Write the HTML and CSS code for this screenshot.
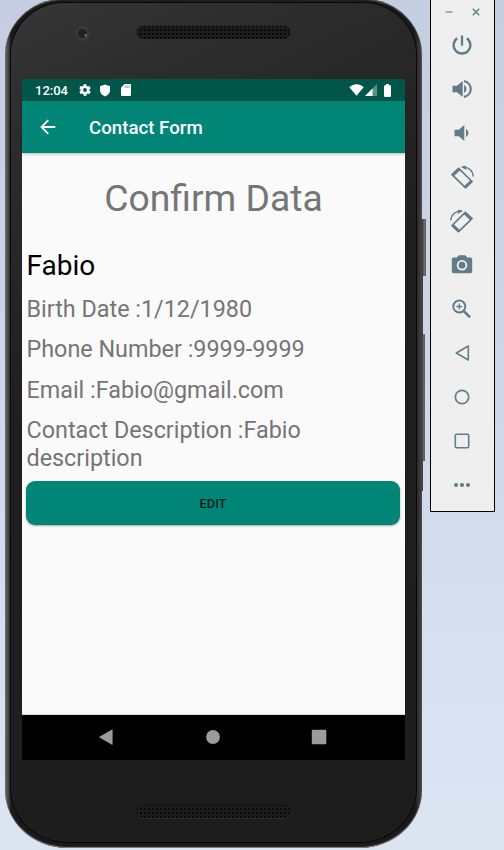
FILE: index.html
```html
<!DOCTYPE html>
<html lang="en">
<head>
<meta charset="utf-8">
<title>Contact Form</title>
<link rel="stylesheet" href="styles.css">
</head>
<body>
<div class="desktop">
  <div class="phone">
    <span class="side-key power-key"></span>
    <span class="side-key edge-key"></span>
    <span class="side-key volume-key"></span>
    <div class="face">
      <div class="bezel-top">
        <span class="camera"></span>
        <span class="speaker"></span>
      </div>
      <div class="screen">
        <div class="status-bar">
          <span class="clock">12:04</span>
          <svg class="gear" width="14" height="14" viewBox="0 0 24 24"><path fill="#fff" fill-rule="evenodd" d="M19.4 13c.1-.3.1-.6.1-1s0-.7-.1-1l2.1-1.600c.2-.2.2-.4.1-.6l-2-3.500c-.1-.2-.4-.3-.6-.2l-2.500 1c-.5-.4-1.100-.7-1.700-1l-.4-2.600c0-.2-.2-.5-.4-.5h-4c-.2 0-.5.2-.5.4l-.4 2.700c-.6.2-1.100.6-1.700 1l-2.400-1c-.2-.1-.5 0-.6.2l-2 3.500c-.1.2-.1.5.1.6L4.600 11c-.1.3-.1.700-.1 1s0 .7.1 1l-2.100 1.600c-.2.2-.2.4-.1.6l2 3.500c.1.2.4.3.6.2l2.500-1c.5.4 1.100.7 1.700 1l.4 2.600c0 .3.2.5.5.5h4c.2 0 .5-.2.5-.5l.4-2.600c.6-.3 1.200-.6 1.700-1l2.500 1c.2.1.5 0 .6-.2l2-3.500c.1-.2.1-.5-.1-.6zM12 15.300a3.300 3.300 0 1 1 0-6.600 3.300 3.300 0 0 1 0 6.600z"/></svg>
          <svg class="shield" width="12" height="13" viewBox="0 0 12 13"><path fill="#fff" d="M6 .4 11 2.300v4c0 2.800-1.900 4.900-5 6.200-3.100-1.300-5-3.400-5-6.200v-4z"/></svg>
          <svg class="sd" width="10" height="12" viewBox="0 0 10 12"><path fill="#fff" d="M3.500 0H9q1 0 1 1v10q0 1-1 1H1q-1 0-1-1V3.700z"/><path stroke="#005648" stroke-width=".8" opacity=".65" d="M4.300 1.500V4M6.200 1.500V4M8.100 1.500V4"/></svg>
          <span class="grow"></span>
          <svg class="wifi" width="15" height="12" viewBox="0 0 15 12"><path fill="#fff" d="M.3 3.200C4.500-.8 10.500-.8 14.700 3.200L7.500 11.800z"/></svg>
          <svg class="signal" width="12" height="12" viewBox="0 0 12 12"><path fill="#fff" opacity=".35" d="M12 0v12H0z"/><path fill="#fff" d="M7.500 4.500V12H0z"/></svg>
          <svg class="battery" width="7" height="13" viewBox="0 0 7 13"><path fill="#fff" d="M2 0h3v1.200h1q1 0 1 1V12q0 1-1 1H1q-1 0-1-1V2.200q0-1 1-1h1z"/></svg>
        </div>
        <div class="app-bar">
          <svg width="16" height="16" viewBox="0 0 16 16"><path fill="none" stroke="#fff" stroke-width="1.800" d="M15.300 8H1.800M8.300 1.200 1.500 8l6.800 6.800"/></svg>
          <span class="app-title">Contact Form</span>
        </div>
        <div class="content">
          <h1>Confirm Data</h1>
          <p class="name">Fabio</p>
          <p class="field">Birth Date :1/12/1980</p>
          <p class="field">Phone Number :9999-9999</p>
          <p class="field">Email :Fabio@gmail.com</p>
          <p class="field">Contact Description :Fabio description</p>
          <button class="edit" type="button">EDIT</button>
        </div>
        <div class="nav-bar">
          <svg width="16" height="16" viewBox="0 0 16 16"><path fill="#9b9b9b" d="M14.600.7v14.800q0 .5-.6.2L1.500 8.500q-.6-.4 0-.8L14 .4q.6-.3.6.3z"/></svg>
          <svg width="16" height="16" viewBox="0 0 16 16"><circle cx="8" cy="8" r="6.900" fill="#9b9b9b"/></svg>
          <svg width="16" height="16" viewBox="0 0 16 16"><rect x=".8" y=".8" width="14.500" height="14.500" rx="1" fill="#9b9b9b"/></svg>
        </div>
      </div>
      <div class="bezel-bottom"><span class="speaker"></span></div>
    </div>
  </div>
  <div class="toolbar">
    <div class="window-controls">
      <svg width="8" height="8" viewBox="0 0 8 8"><path stroke="#9fb0b9" stroke-width="2" d="M.5 4h7"/></svg>
      <svg width="8" height="8" viewBox="0 0 8 8"><path stroke="#617d8a" stroke-width="1.400" d="m.8.8 6.400 6.400M7.200.8.8 7.200"/></svg>
    </div>
    <div class="tools">
      <svg viewBox="0 0 24 24"><path fill="none" stroke="#617d8a" stroke-width="2.300" d="M12 2.500v10.200M7.200 5.200a8.400 8.400 0 1 0 9.600 0"/></svg>
      <svg viewBox="0 0 24 24"><path fill="#617d8a" d="M2.500 8.700h4.500L12.700 4v16L7 15.300H2.500zM14 8c3.300 1.500 3.300 6.500 0 8z"/><path fill="none" stroke="#617d8a" stroke-width="2.200" d="M14 4.200c9 1.600 9 14 0 15.600"/></svg>
      <svg viewBox="0 0 24 24"><path fill="#617d8a" d="M4.500 8.700h4.300L14.300 4v16l-5.500-4.700H4.500zM16 8c3.300 1.500 3.300 6.500 0 8z"/></svg>
      <svg viewBox="0 0 24 24"><g fill="none" stroke="#617d8a"><path stroke-width="1.700" stroke-linejoin="round" d="m8.700 3.300 13.300 13.200-6.600 6.200L2 9.700z"/><path stroke-width="3" d="M9.400 3.800 2.700 10.200M15.200 22.200l6.400-6.200"/><path stroke-width="1.400" d="M12 2.200c6-.8 11 3.300 11.200 9.300"/></g><path fill="#617d8a" d="m11 2 4.500-1.500 1 4.500z"/></svg>
      <svg viewBox="0 0 24 24"><g transform="matrix(-1 0 0 1 24 0)"><g fill="none" stroke="#617d8a"><path stroke-width="1.700" stroke-linejoin="round" d="m8.700 3.300 13.300 13.200-6.600 6.200L2 9.700z"/><path stroke-width="3" d="M9.400 3.800 2.700 10.200M15.200 22.200l6.400-6.200"/><path stroke-width="1.400" d="M12 2.200c6-.8 11 3.300 11.200 9.300"/></g><path fill="#617d8a" d="m11 2 4.500-1.500 1 4.500z"/></g></svg>
      <svg viewBox="0 0 24 24"><path fill="#617d8a" fill-rule="evenodd" d="M8.700 2.200h6.600l2 2.200h3.200q1.700 0 1.700 1.700v12.500q0 1.700-1.700 1.700h-17q-1.700 0-1.700-1.700V6.100q0-1.700 1.700-1.700h3.200zM12 6.900a5.300 5.300 0 1 0 0 10.600 5.300 5.300 0 0 0 0-10.600z"/><circle cx="12" cy="12.200" r="3.400" fill="#617d8a"/></svg>
      <svg viewBox="0 0 24 24"><g fill="none" stroke="#617d8a"><circle cx="9.300" cy="9.500" r="6" stroke-width="1.900"/><path stroke-width="1.300" d="M6.300 9.500h6M9.300 6.500v6"/><path stroke-width="2.500" d="m13.700 14 6.400 6.400"/></g></svg>
      <svg viewBox="0 0 24 24"><path fill="none" stroke="#617d8a" stroke-width="1.600" stroke-linejoin="round" d="M18.300 5v14L6.300 12z"/></svg>
      <svg viewBox="0 0 24 24"><circle cx="12" cy="12" r="6.700" fill="none" stroke="#617d8a" stroke-width="1.700"/></svg>
      <svg viewBox="0 0 24 24"><rect x="5.300" y="5.300" width="13.400" height="13.400" rx="1.200" fill="none" stroke="#617d8a" stroke-width="1.600"/></svg>
      <svg viewBox="0 0 24 24"><g fill="#617d8a"><circle cx="6" cy="12" r="2.100"/><circle cx="12" cy="12" r="2.100"/><circle cx="18" cy="12" r="2.100"/></g></svg>
    </div>
  </div>
</div>
</body>
</html>
```
FILE: styles.css
```css
* { box-sizing: border-box; }
body { margin: 0; font-family: Roboto, sans-serif; }
.desktop {
  width: 504px; height: 850px; overflow: hidden;
  display: flex; align-items: flex-start;
  padding-left: 5px;
  background: linear-gradient(#c5cde0, #cdd7e9 45%, #dce6f3);
}
.phone {
  position: relative; flex: none;
  width: 417px; height: 849px; margin-top: -1px;
  padding: 4px 6px 6px;
  border-radius: 58px 58px 62px 62px / 56px 56px 58px 58px;
  background: linear-gradient(90deg, #6b6b6b 0, #555 2px, #3b3b3b 4px, #1a1a1a 6px, #1a1a1a 410px, #302e2e 413px, #4a4646 417px);
  box-shadow: inset 0 1px 1px #666, inset 0 -1px 1px #8a8783;
}
.face {
  height: 100%;
  border-radius: 53px 53px 57px 57px / 52px 52px 54px 54px;
  background: linear-gradient(155deg, #363637 0, #2c2c2d 14%, #1e1e1e 42%, #1d1d1d);
  box-shadow: 0 0 0 1px #090909;
}
.side-key { position: absolute; background: linear-gradient(90deg, #3c3939, #777273 65%, #514c4c); }
.power-key { left: 417px; top: 220px; width: 4px; height: 57px; }
.volume-key { left: 417px; top: 335px; width: 3px; height: 127px; }
.edge-key { left: 416px; top: 220px; width: 2px; height: 272px; background: #454141; }
.bezel-top { height: 76px; display: flex; padding: 23px 0 0 64px; }
.camera {
  width: 15px; height: 15px; border-radius: 50%;
  background: radial-gradient(circle at 72% 62%, #744b5b 0 1px, transparent 2px), radial-gradient(circle, #202023 0 4px, #39393a 5px);
}
.speaker {
  width: 153px; height: 13px; border-radius: 7px;
  background: radial-gradient(circle, #090909 0 1px, transparent 1.500px) 2px 2px / 4px 4px, #1d1d1e;
  box-shadow: 0 0 1px #090909, 0 1px 0 #343434;
}
.bezel-top .speaker { margin-left: 47px; }
.bezel-bottom { padding: 45px 0 0 126px; }
.bezel-bottom .speaker { display: block; }
.screen { width: 383px; height: 681px; margin-left: 11px; display: flex; flex-direction: column; background: #fafafa; }
.status-bar { height: 22px; display: flex; align-items: center; padding: 0 14px 0 13px; background: #005648; color: #fff; }
.clock { width: 43px; font-size: 13px; font-weight: 500; line-height: 22px; padding-top: 1px; }
.shield { margin-left: 7px; }
.sd { margin-left: 10px; }
.grow { flex: 1; }
.wifi { margin-right: 1px; }
.signal { margin-right: 7px; }
.app-bar {
  height: 52px; display: flex; align-items: center; padding-left: 18px;
  background: #008577; color: #fff; box-shadow: 0 1px 3px rgba(0,0,0,.25);
}
.app-title { margin-left: 33px; padding-top: 2px; font-size: 18.700px; font-weight: 500; line-height: 22px; }
.content { flex: 1; padding: 23px 4px 0; color: #757575; border-bottom: 1px solid #d5d5d5; }
h1, p { margin: 0; font-weight: 400; }
h1 { font-size: 37.300px; line-height: 44px; text-align: center; }
.name { margin: 29px 0 12px; padding-left: .5px; font-size: 28px; line-height: 34px; color: #000; }
.field { margin-bottom: 13.200px; padding-left: .5px; font-size: 23.350px; line-height: 27.300px; }
.name + .field { padding-top: 1px; }
.edit {
  display: block; width: 374px; height: 44px; margin-top: -4px; padding: 1px 0 0;
  border: 0; border-radius: 9px; background: #008577; color: #001f1a;
  font: 500 12.800px/43px Roboto, sans-serif;
  box-shadow: 0 1px 2px rgba(0,0,0,.35);
}
.nav-bar { height: 45px; display: flex; justify-content: space-between; align-items: center; padding: 0 78px 1px 76px; background: #000; }
.toolbar { width: 65px; height: 513px; flex: none; margin: -1px 0 0 8px; border: 1px solid #000; background: #efefef; }
.window-controls { height: 23px; padding: 8px 14px 0; display: flex; justify-content: space-between; }
.tools { display: flex; flex-direction: column; padding-left: 19px; }
.tools svg { display: block; width: 24px; height: 24px; margin: 10px 0; }
```
